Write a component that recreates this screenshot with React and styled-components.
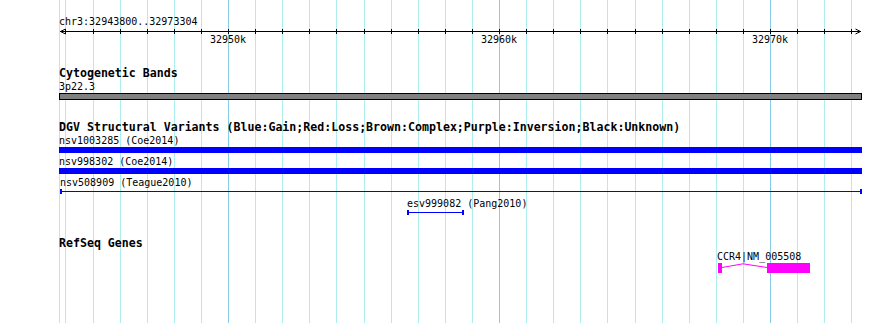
import styled, { createGlobalStyle } from 'styled-components';

// scale: pixel column for a kb mark (32950k sits on x=228)
const ORIGIN = 59;
const kbX = (k) => Math.round(228 + (k - 50) * 27.1);
const KB_MARKS = Array.from({ length: 30 }, (_, i) => 44 + i);
const MAJOR_LABELS = [50, 60, 70];

const dgvRows = [
    { name: 'nsv1003285 (Coe2014)', x: 59, w: 803, kind: 'bar' },
    { name: 'nsv998302 (Coe2014)', x: 59, w: 803, kind: 'bar' },
    { name: 'nsv508909 (Teague2010)', x: 60, w: 802, kind: 'span' },
    { name: 'esv999082 (Pang2010)', x: 407, w: 57, kind: 'span' },
];

const GlobalStyle = createGlobalStyle`
    html, body {
        margin: 0;
        background: #fff;
    }
`;

//
const Panel = styled.div({
    position: 'relative',
    width: '890px',
    height: '323px',
    overflow: 'hidden',
    background: '#fff',
    color: '#000',
    fontFamily: '"DejaVu Sans Mono", "Liberation Mono", monospace',
});

const GridLayer = styled.svg({
    position: 'absolute',
    inset: 0,
});

const Content = styled.div({
    position: 'relative',
    paddingLeft: `${ORIGIN}px`,
});

const SmallText = styled.div({
    height: '10px',
    fontSize: '10px',
    lineHeight: '9px',
    whiteSpace: 'nowrap',
});

const TrackTitle = styled.div({
    height: '12px',
    fontSize: '11.6px',
    lineHeight: '11px',
    fontWeight: 'bold',
    whiteSpace: 'nowrap',
});

// ruler
const Ruler = styled.div({
    paddingTop: '17px',
});

const Axis = styled.svg({
    display: 'block',
});

const TickRow = styled.div({
    position: 'relative',
    height: '10px',
});

const TickLabel = styled(SmallText)({
    position: 'absolute',
    top: 0,
});

// tracks
const Track = styled.section(({ $gap }) => ({
    paddingTop: `${$gap}px`,
}));

const Rows = styled.div(({ $gap }) => ({
    paddingTop: `${$gap}px`,
}));

const FeatureRow = styled.div({
    height: '21px',
});

const Feature = styled.div({
    display: 'flex',
    flexDirection: 'column',
});

const Label = styled(SmallText)(({ $gap = 1 }) => ({
    marginBottom: `${$gap}px`,
}));

const Band = styled.div({
    boxSizing: 'border-box',
    height: '7px',
    border: '1px solid #000',
    background: '#808080',
});

const Bar = styled.div({
    height: '6px',
    background: '#0000ff',
});

const Span = styled.div({
    boxSizing: 'border-box',
    height: '5px',
    borderLeft: '2px solid #0000ff',
    borderRight: '2px solid #0000ff',
    background: 'linear-gradient(#0000ff, #0000ff) 0 2px / 100% 1px no-repeat',
});

const GeneGlyph = styled.svg({
    display: 'block',
    marginLeft: '1px',
});

//
const Grid = () => (

    <GridLayer width="890" height="323" shapeRendering="crispEdges">
        <line x1={ORIGIN + 0.5} y1="0" x2={ORIGIN + 0.5} y2="323" stroke="#aeeeee" />
        {
            KB_MARKS.map((k) => (
                <line
                    key={k}
                    x1={kbX(k) + 0.5}
                    y1="0"
                    x2={kbX(k) + 0.5}
                    y2="323"
                    stroke={k % 10 === 0 ? '#87cde6' : '#aeeeee'}
                />
            ))
        }
    </GridLayer>

);

//
const ScaleBar = () => (

    <Ruler>
        <SmallText>chr3:32943800..32973304</SmallText>
        <Axis width="803" height="8" shapeRendering="crispEdges">
            <line x1="1" y1="4.5" x2="802" y2="4.5" stroke="#000" />
            {
                KB_MARKS.map((k) => (
                    <line
                        key={k}
                        x1={kbX(k) - ORIGIN + 0.5}
                        y1="2"
                        x2={kbX(k) - ORIGIN + 0.5}
                        y2="7"
                        stroke="#000"
                    />
                ))
            }
            <polyline points="6.5,2 1.5,4.5 6.5,7" fill="none" stroke="#000" shapeRendering="auto" />
            <polyline points="796.5,2 801.5,4.5 796.5,7" fill="none" stroke="#000" shapeRendering="auto" />
        </Axis>
        <TickRow>
            {
                MAJOR_LABELS.map((k) => (
                    <TickLabel key={k} style={{ left: kbX(k) - ORIGIN - 18 }}>
                        {`329${k}k`}
                    </TickLabel>
                ))
            }
        </TickRow>
    </Ruler>

);

//
const App = () => (

    <Panel>
        <GlobalStyle />
        <Grid />
        <Content>
            <ScaleBar />

            <Track $gap={23}>
                <TrackTitle>Cytogenetic Bands</TrackTitle>
                <Rows $gap={2}>
                    <Feature style={{ width: 803 }}>
                        <Label>3p22.3</Label>
                        <Band />
                    </Feature>
                </Rows>
            </Track>

            <Track $gap={22}>
                <TrackTitle>DGV Structural Variants (Blue:Gain;Red:Loss;Brown:Complex;Purple:Inversion;Black:Unknown)</TrackTitle>
                <Rows $gap={2}>
                    {
                        dgvRows.map((row) => (
                            <FeatureRow key={row.name}>
                                <Feature style={{ marginLeft: row.x - ORIGIN, width: row.w }}>
                                    <Label>{row.name}</Label>
                                    {row.kind === 'bar' ? <Bar /> : <Span />}
                                </Feature>
                            </FeatureRow>
                        ))
                    }
                </Rows>
            </Track>

            <Track $gap={18}>
                <TrackTitle>RefSeq Genes</TrackTitle>
                <Rows $gap={2}>
                    <Feature style={{ marginLeft: 717 - ORIGIN, width: 93 }}>
                        <Label>CCR4|NM_005508</Label>
                        <GeneGlyph width="92" height="10">
                            <rect x="0" y="0" width="4" height="10" fill="#ff00ff" />
                            <polyline points="4,4.5 25,0.8 49,4.5" fill="none" stroke="#ff00ff" />
                            <rect x="49" y="0" width="43" height="10" fill="#ff00ff" />
                        </GeneGlyph>
                    </Feature>
                </Rows>
            </Track>
        </Content>
    </Panel>

);

export default App;
